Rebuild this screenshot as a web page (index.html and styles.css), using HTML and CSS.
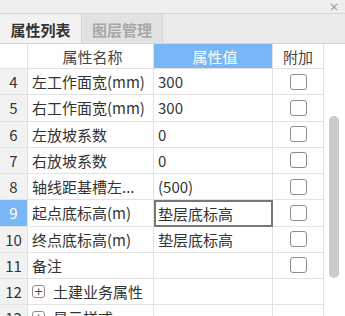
FILE: index.html
```html
<!DOCTYPE html>
<html>
<head>
<meta charset="utf-8">
<link rel="stylesheet" href="styles.css">
</head>
<body>
<div class="panel">
  <div class="title"><span class="close">×</span></div>
  <div class="tabs">
    <div class="tab active">属性列表</div>
    <div class="tab">图层管理</div>
  </div>
  <div class="body">
    <div class="grid">
      <div class="c idx hd"></div>
      <div class="c name hd center">属性名称</div>
      <div class="c val hd blue center">属性值</div>
      <div class="c add hd center">附加</div>

      <div class="c idx">4</div><div class="c name">左工作面宽(mm)</div><div class="c val">300</div><div class="c add"><span class="cb"></span></div>
      <div class="c idx">5</div><div class="c name">右工作面宽(mm)</div><div class="c val">300</div><div class="c add"><span class="cb"></span></div>
      <div class="c idx">6</div><div class="c name">左放坡系数</div><div class="c val">0</div><div class="c add"><span class="cb"></span></div>
      <div class="c idx">7</div><div class="c name">右放坡系数</div><div class="c val">0</div><div class="c add"><span class="cb"></span></div>
      <div class="c idx">8</div><div class="c name">轴线距基槽左...</div><div class="c val">(500)</div><div class="c add"><span class="cb"></span></div>
      <div class="c idx sel">9</div><div class="c name">起点底标高(m)</div><div class="c val edit">垫层底标高</div><div class="c add"><span class="cb"></span></div>
      <div class="c idx">10</div><div class="c name">终点底标高(m)</div><div class="c val">垫层底标高</div><div class="c add"><span class="cb"></span></div>
      <div class="c idx">11</div><div class="c name">备注</div><div class="c val"></div><div class="c add"><span class="cb"></span></div>
      <div class="c idx">12</div><div class="c name"><span class="plus">+</span><span class="grp">土建业务属性</span></div><div class="c val"></div><div class="c add"></div>
      <div class="c idx">13</div><div class="c name"><span class="plus">+</span><span class="grp">显示样式</span></div><div class="c val"></div><div class="c add"></div>
    </div>
    <div class="scroll"><div class="thumb"></div></div>
  </div>
</div>
</body>
</html>
```
FILE: styles.css
```css
* { box-sizing: border-box; }
html, body { margin: 0; padding: 0; background: #fff; }
body {
  font-family: "Noto Sans CJK SC", "Noto Sans", sans-serif;
  font-size: 15px;
  color: #333;
}
.panel {
  width: 345px;
  height: 316px;
  overflow: hidden;
  background: #fff;
}
.title {
  height: 14px;
  background: #efefef;
  border-bottom: 1px solid #d6d6d6;
  display: flex;
  justify-content: flex-end;
  align-items: center;
  padding-right: 6px;
}
.close {
  font-family: "DejaVu Sans", sans-serif;
  font-size: 12px;
  line-height: 12px;
  color: #9a9a9a;
}
.tabs {
  height: 30px;
  background: #ebebeb;
  border-bottom: 1px solid #d6d6d6;
  display: flex;
}
.tab {
  width: 81px;
  height: 29px;
  border-right: 1px solid #d4d4d4;
  background: #e2e2e2;
  color: #a8a8a8;
  display: flex;
  align-items: center;
  justify-content: center;
  font-weight: bold;
  padding-top: 1px;
}
.tab.active {
  width: 82px;
  background: #f2f2f2;
  color: #333;
}
.body {
  display: flex;
}
.grid {
  width: 324px;
  display: grid;
  grid-template-columns: 28px 126px 119px 51px;
  grid-template-rows: 25px;
  grid-auto-rows: 26.25px;
}
.c {
  border-right: 1px solid #e2e2e2;
  border-bottom: 1px solid #e2e2e2;
  display: flex;
  align-items: center;
  white-space: nowrap;
  overflow: hidden;
  min-width: 0;
}
.center { justify-content: center; }
.hd { color: #444; }
.blue { background: #79b6f5; color: #fff; }
.idx {
  background: #f2f2f2;
  justify-content: center;
}
.idx.hd { background: #fff; }
.idx.sel { background: #79b6f5; color: #fff; }
.name { padding-left: 4px; }
.val { padding-left: 4px; }
.val.edit {
  border: 2px solid #777;
  padding-left: 2px;
}
.add { justify-content: center; }
.cb {
  width: 17px;
  height: 16px;
  border: 1.5px solid #8c8c8c;
  border-radius: 3px;
  background: #fff;
  margin-left: 1px;
}
.plus {
  width: 13px;
  height: 13px;
  border: 1px solid #8c8c8c;
  border-radius: 3px;
  font-family: "DejaVu Sans", sans-serif;
  font-size: 11px;
  line-height: 11px;
  display: flex;
  align-items: center;
  justify-content: center;
  color: #444;
}
.grp { margin-left: 8px; }
.scroll {
  width: 21px;
  padding-top: 72px;
  padding-left: 5px;
}
.thumb {
  width: 10px;
  height: 162px;
  background: #cbcbcb;
  border-radius: 5px;
}
```
